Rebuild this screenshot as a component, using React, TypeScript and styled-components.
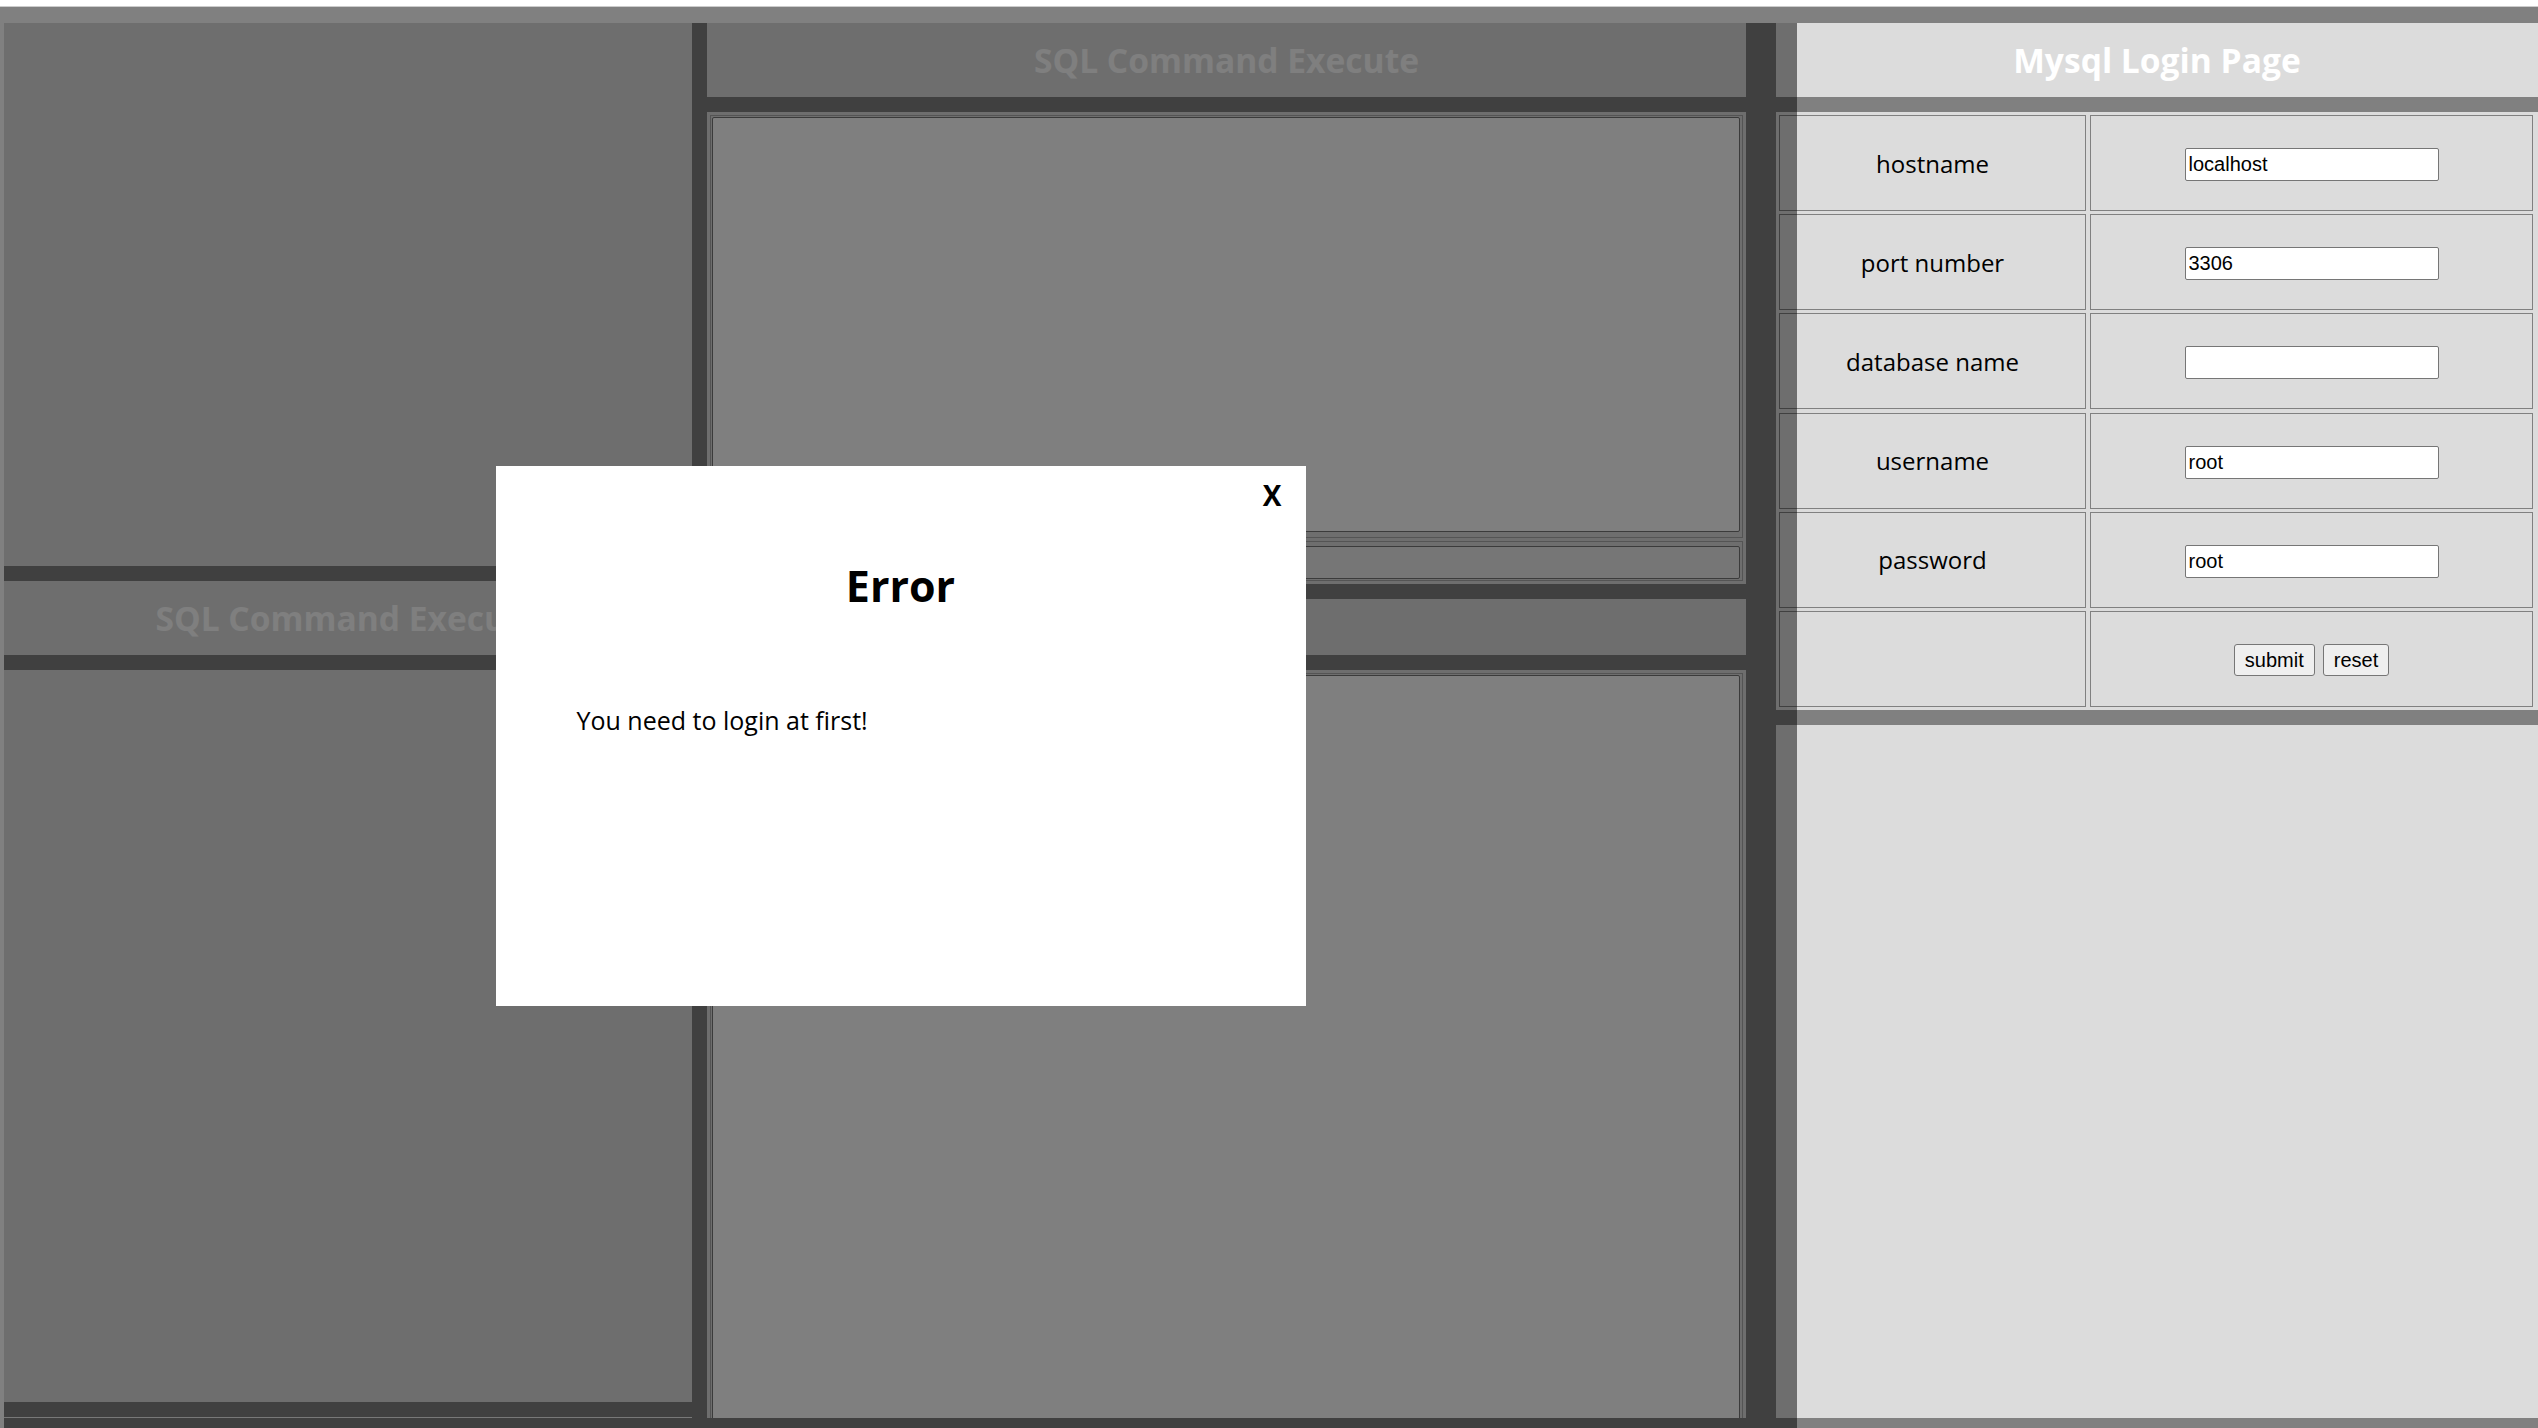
import React from "react";
import styled, { createGlobalStyle } from "styled-components";

const GlobalStyle = createGlobalStyle`
  html, body {
    margin: 0;
    padding: 0;
    background: #ffffff;
    overflow: hidden;
  }
  body {
    font-family: "Open Sans", "Noto Sans", sans-serif;
  }
  *, *::before, *::after {
    box-sizing: border-box;
  }
`;

const Screen = styled.div`
  position: relative;
  height: 1428px;
  overflow: hidden;
  display: flex;
  flex-direction: column;
`;

const TopStrip = styled.div`
  flex: 0 0 7px;
  background: #ffffff;
  border-bottom: 1px solid #cccccc;
`;

const Workspace = styled.main`
  flex: 1 1 auto;
  min-height: 0;
  background: #808080;
  padding: 16px 0 10px 4px;
  display: flex;
`;

const Column = styled.section<{ $width: number; $offset?: number }>`
  flex: 0 0 ${(p) => p.$width}px;
  margin-left: ${(p) => p.$offset ?? 0}px;
  display: flex;
  flex-direction: column;
  gap: 15px;
  overflow: hidden;
`;

const Panel = styled.div<{ $height?: number; $tone?: "base" | "edge" }>`
  flex: ${(p) => (p.$height ? `0 0 ${p.$height}px` : "1 0 auto")};
  background: ${(p) => (p.$tone === "edge" ? "#f0f0f0" : "#dcdcdc")};
`;

const HeaderBar = styled.header<{ $height: number }>`
  flex: 0 0 ${(p) => p.$height}px;
  background: #dcdcdc;
  display: flex;
  align-items: center;
  justify-content: center;
`;

const HeaderTitle = styled.h2`
  margin: 0;
  font-family: "Open Sans", "Noto Sans", sans-serif;
  font-weight: 700;
  font-size: 33.6px;
  line-height: normal;
  color: #ffffff;
`;

const EditorPanel = styled.div<{ $height: number }>`
  flex: 0 0 ${(p) => p.$height}px;
  background: #dcdcdc;
  padding: 3px 3px 2px 3px;
  display: flex;
  flex-direction: column;
  gap: 3px;
`;

const FieldFrame = styled.div<{ $pad: string }>`
  flex-shrink: 0;
  border: 1px solid #a8a8a8;
  padding: ${(p) => p.$pad};
`;

const CodeArea = styled.textarea<{ $height: number }>`
  display: block;
  width: 100%;
  height: ${(p) => p.$height}px;
  margin: 0;
  padding: 3px;
  border: 1px solid #767676;
  border-radius: 2px;
  background: #ffffff;
  resize: none;
  font: 20px "Liberation Mono", monospace;
`;

const CommandLine = styled.input`
  display: block;
  width: 100%;
  height: 33px;
  margin: 0;
  padding: 1px 3px;
  border: 1px solid #767676;
  border-radius: 2px;
  background: #ececec;
  font: 20px "Liberation Sans", Arial, sans-serif;
`;

const LoginGrid = styled.form`
  flex: 0 0 598px;
  margin: 0;
  background: #dcdcdc;
  display: grid;
  grid-template-columns: 307px 443px;
  grid-auto-rows: 96px;
  column-gap: 4px;
  row-gap: 3.2px;
  padding: 3px 0 0 3px;
  align-content: start;
`;

const Cell = styled.div<{ $field?: boolean }>`
  border: 1px solid #808080;
  display: flex;
  align-items: center;
  justify-content: center;
  gap: 8px;
  padding-top: ${(p) => (p.$field ? "3px" : "0")};
`;

const Label = styled.span`
  font-family: "Open Sans", "Noto Sans", sans-serif;
  font-size: 24px;
  color: #000000;
`;

const TextInput = styled.input`
  width: 254px;
  height: 33px;
  margin: 0;
  padding: 1px 3px;
  border: 1px solid #767676;
  border-radius: 2px;
  background: #ffffff;
  color: #000000;
  font: 20px "Liberation Sans", Arial, sans-serif;
`;

const FormButton = styled.button`
  height: 32px;
  margin: 0;
  padding: 0 10px;
  border: 1px solid #767676;
  border-radius: 3px;
  background: #efefef;
  color: #000000;
  font: 20px "Liberation Sans", Arial, sans-serif;
`;

const Backdrop = styled.div`
  position: absolute;
  top: 23px;
  left: 4px;
  width: 1793px;
  bottom: 0;
  background: rgba(0, 0, 0, 0.5);
  display: flex;
  justify-content: center;
  align-items: flex-start;
  padding-top: 443px;
`;

const Dialog = styled.div`
  position: relative;
  width: 810px;
  height: 540px;
  background: #ffffff;
  color: #000000;
  font-family: "Open Sans", "Noto Sans", sans-serif;
`;

const CloseMark = styled.span`
  position: absolute;
  top: 10px;
  right: 24px;
  font-size: 28px;
  font-weight: 700;
  line-height: normal;
`;

const DialogTitle = styled.h1`
  margin: 0;
  padding-top: 90px;
  text-align: center;
  font-size: 43px;
  font-weight: 700;
  line-height: normal;
`;

const DialogText = styled.p`
  margin: 88px 0 0 81px;
  font-size: 25px;
  line-height: normal;
`;

const fields = [
  { label: "hostname", value: "localhost" },
  { label: "port number", value: "3306" },
  { label: "database name", value: "" },
  { label: "username", value: "root" },
  { label: "password", value: "root" },
];

export default function App() {
  return (
    <>
      <GlobalStyle />
      <Screen>
        <TopStrip />
        <Workspace>
          <Column $width={688}>
            <Panel $height={543} />
            <HeaderBar $height={74}>
              <HeaderTitle>SQL Command Execute</HeaderTitle>
            </HeaderBar>
            <Panel $height={732} />
            <Panel $height={300} $tone="edge" />
          </Column>

          <Column $width={1039} $offset={15}>
            <HeaderBar $height={74}>
              <HeaderTitle>SQL Command Execute</HeaderTitle>
            </HeaderBar>
            <EditorPanel $height={472}>
              <FieldFrame $pad="1px 2px 5px 1px">
                <CodeArea $height={415} />
              </FieldFrame>
              <FieldFrame $pad="4px 2px 1px 1px">
                <CommandLine type="text" />
              </FieldFrame>
            </EditorPanel>
            <HeaderBar $height={56} />
            <EditorPanel $height={800}>
              <FieldFrame $pad="1px 2px 5px 1px">
                <CodeArea $height={900} />
              </FieldFrame>
            </EditorPanel>
          </Column>

          <Column $width={762} $offset={30}>
            <HeaderBar $height={74}>
              <HeaderTitle>Mysql Login Page</HeaderTitle>
            </HeaderBar>
            <LoginGrid onSubmit={(e) => e.preventDefault()}>
              {fields.map((f) => (
                <React.Fragment key={f.label}>
                  <Cell>
                    <Label>{f.label}</Label>
                  </Cell>
                  <Cell $field>
                    <TextInput type="text" defaultValue={f.value} />
                  </Cell>
                </React.Fragment>
              ))}
              <Cell />
              <Cell $field>
                <FormButton type="submit">submit</FormButton>
                <FormButton type="reset">reset</FormButton>
              </Cell>
            </LoginGrid>
            <Panel />
          </Column>
        </Workspace>

        <Backdrop>
          <Dialog>
            <CloseMark>X</CloseMark>
            <DialogTitle>Error</DialogTitle>
            <DialogText>You need to login at first!</DialogText>
          </Dialog>
        </Backdrop>
      </Screen>
    </>
  );
}
